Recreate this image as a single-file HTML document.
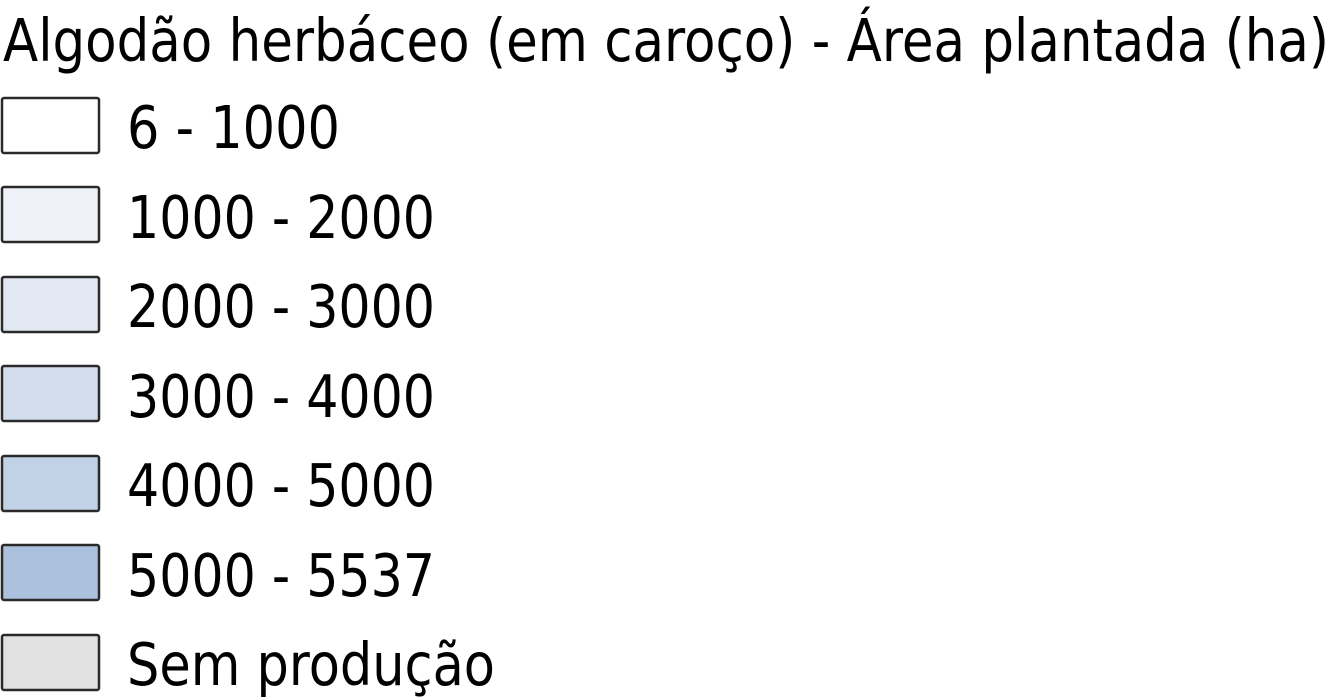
<!DOCTYPE html>
<html><head><meta charset="utf-8"><style>
html,body{margin:0;padding:0;background:#fff;width:1332px;height:697px;overflow:hidden}
svg text{font-family:"DejaVu Sans","Liberation Sans",sans-serif;fill:#000}
</style></head><body>
<svg width="1332" height="697" viewBox="0 0 1332 697">
<text x="3" y="61" font-size="59" textLength="1326" lengthAdjust="spacingAndGlyphs">Algodão herbáceo (em caroço) - Área plantada (ha)</text>
<g stroke="#2a2a2a" stroke-width="2.5">
<rect x="2" y="98" width="97" height="55" rx="2" fill="#ffffff"/>
<rect x="2" y="187" width="97" height="55" rx="2" fill="#eff2f8"/>
<rect x="2" y="277" width="97" height="55" rx="2" fill="#e2e8f2"/>
<rect x="2" y="366" width="97" height="55" rx="2" fill="#d3deec"/>
<rect x="2" y="456" width="97" height="55" rx="2" fill="#c1d1e6"/>
<rect x="2" y="545" width="97" height="55" rx="2" fill="#abc1dd"/>
<rect x="2" y="635" width="97" height="55" rx="2" fill="#e1e1e1"/>
</g>
<g font-size="59">
<text x="127" y="148" textLength="213" lengthAdjust="spacingAndGlyphs">6 - 1000</text>
<text x="127" y="238" textLength="308" lengthAdjust="spacingAndGlyphs">1000 - 2000</text>
<text x="127" y="327" textLength="308" lengthAdjust="spacingAndGlyphs">2000 - 3000</text>
<text x="127" y="417" textLength="308" lengthAdjust="spacingAndGlyphs">3000 - 4000</text>
<text x="127" y="506" textLength="308" lengthAdjust="spacingAndGlyphs">4000 - 5000</text>
<text x="127" y="596" textLength="308" lengthAdjust="spacingAndGlyphs">5000 - 5537</text>
<text x="127" y="685" textLength="368" lengthAdjust="spacingAndGlyphs">Sem produção</text>
</g>
</svg>
</body></html>
